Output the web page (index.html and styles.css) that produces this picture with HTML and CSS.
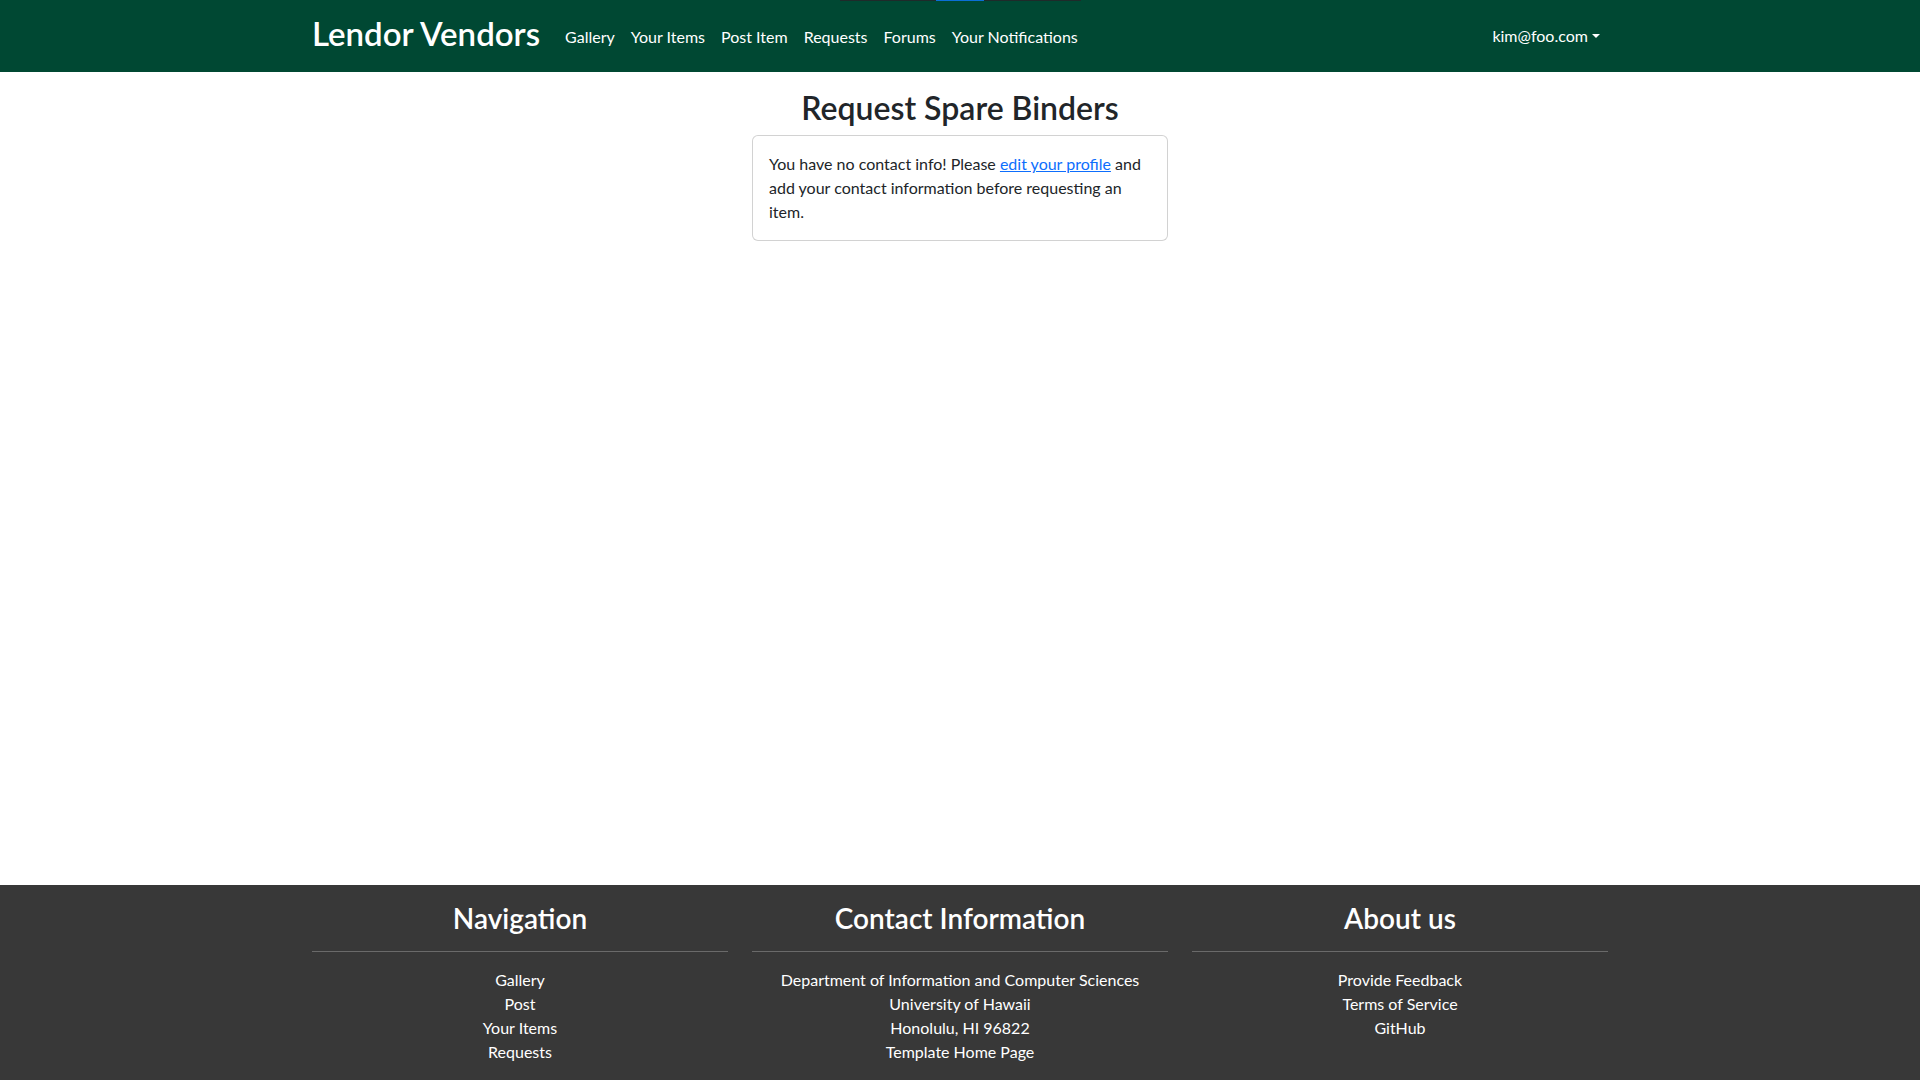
FILE: index.html
```html
<!DOCTYPE html>
<html lang="en">
<head>
<meta charset="utf-8">
<title>Lendor Vendors</title>
<link rel="stylesheet" href="styles.css">
</head>
<body>
<div class="page">
  <div class="topstrip"><span class="seg-a"></span><span class="seg-b"></span><span class="seg-c"></span></div>
  <nav class="navbar">
    <div class="container nav-inner">
      <a class="brand" href="#">Lendor Vendors</a>
      <ul class="nav-links">
        <li><a href="#">Gallery</a></li>
        <li><a href="#">Your Items</a></li>
        <li><a href="#">Post Item</a></li>
        <li><a href="#">Requests</a></li>
        <li><a href="#">Forums</a></li>
        <li><a href="#">Your Notifications</a></li>
      </ul>
      <a class="user dropdown-toggle" href="#">kim@foo.com</a>
    </div>
  </nav>

  <main class="main">
    <div class="container center-col">
      <h2 class="title">Request Spare Binders</h2>
      <div class="card">
        <p class="card-body">You have no contact info! Please <a class="link" href="#">edit your profile</a> and add your contact information before requesting an item.</p>
      </div>
    </div>
  </main>

  <footer class="footer">
    <div class="container footer-row">
      <div class="fcol">
        <h3 class="fhead">Navigation</h3>
        <hr class="fline">
        <a href="#">Gallery</a>
        <a href="#">Post</a>
        <a href="#">Your Items</a>
        <a href="#">Requests</a>
      </div>
      <div class="fcol">
        <h3 class="fhead">Contact Information</h3>
        <hr class="fline">
        <span>Department of Information and Computer Sciences</span>
        <span>University of Hawaii</span>
        <span>Honolulu, HI 96822</span>
        <a href="#">Template Home Page</a>
      </div>
      <div class="fcol">
        <h3 class="fhead">About us</h3>
        <hr class="fline">
        <a href="#">Provide Feedback</a>
        <a href="#">Terms of Service</a>
        <a href="#">GitHub</a>
      </div>
    </div>
  </footer>
</div>
</body>
</html>
```

FILE: styles.css
```css
* { box-sizing: border-box; }
html, body { margin: 0; padding: 0; }
body {
  font-family: Lato, "Noto Sans", "Liberation Sans", sans-serif;
  font-size: 16px;
  line-height: 1.5;
  color: #212529;
  background: #fff;
}
a { text-decoration: none; color: inherit; }

.page {
  min-height: 100vh;
  display: flex;
  flex-direction: column;
  position: relative;
}

.topstrip {
  position: absolute;
  top: 0;
  left: 840px;
  width: 241px;
  height: 1px;
  display: flex;
  z-index: 5;
}
.seg-a { width: 96px; background: #1f2a2a; }
.seg-b { width: 48px; background: #0b6fd6; }
.seg-c { flex: 1; background: #1f2a2a; }

.container {
  width: 1320px;
  margin: 0 auto;
  padding: 0 12px;
}

.navbar {
  background: #004833;
  height: 72px;
  display: flex;
  align-items: center;
}
.nav-inner {
  display: flex;
  align-items: center;
}
.brand {
  color: #fff;
  font-size: 33px;
  font-weight: 600;
  line-height: 1.2;
  margin-right: 17px;
  padding-bottom: 4px;
}
.nav-links {
  list-style: none;
  margin: 0;
  padding: 0;
  display: flex;
  flex: 1;
  padding-top: 1px;
}
.nav-links a, .user {
  display: block;
  color: #fff;
  padding: 8px;
}
.dropdown-toggle::after {
  content: "";
  display: inline-block;
  margin-left: 0.255em;
  vertical-align: 0.255em;
  border-top: 0.3em solid;
  border-right: 0.3em solid transparent;
  border-left: 0.3em solid transparent;
  border-bottom: 0;
}

.main { padding-top: 17px; }
.center-col {
  display: flex;
  flex-direction: column;
  align-items: center;
}
.title {
  font-size: 32px;
  font-weight: 600;
  line-height: 1.2;
  margin: 0 0 8px;
}
.card {
  width: 416px;
  border: 1px solid rgba(0,0,0,0.175);
  border-radius: 6px;
  background: #fff;
}
.card-body { padding: 16px; margin: 0; }
.link { color: #0d6efd; text-decoration: underline; }

.footer {
  margin-top: auto;
  background: #383838;
  color: #fff;
  padding: 17px 0 16px;
}
.footer-row {
  display: grid;
  grid-template-columns: repeat(3, 1fr);
  column-gap: 24px;
}
.fcol {
  display: flex;
  flex-direction: column;
  align-items: center;
  text-align: center;
}
.fhead {
  font-size: 28px;
  font-weight: 600;
  line-height: 1.2;
  margin: 0;
}
.fline {
  align-self: stretch;
  margin: 15px 0 16px;
  border: 0;
  border-top: 1px solid #fff;
  opacity: 0.25;
}
.fcol a, .fcol span { color: #fff; }
```
